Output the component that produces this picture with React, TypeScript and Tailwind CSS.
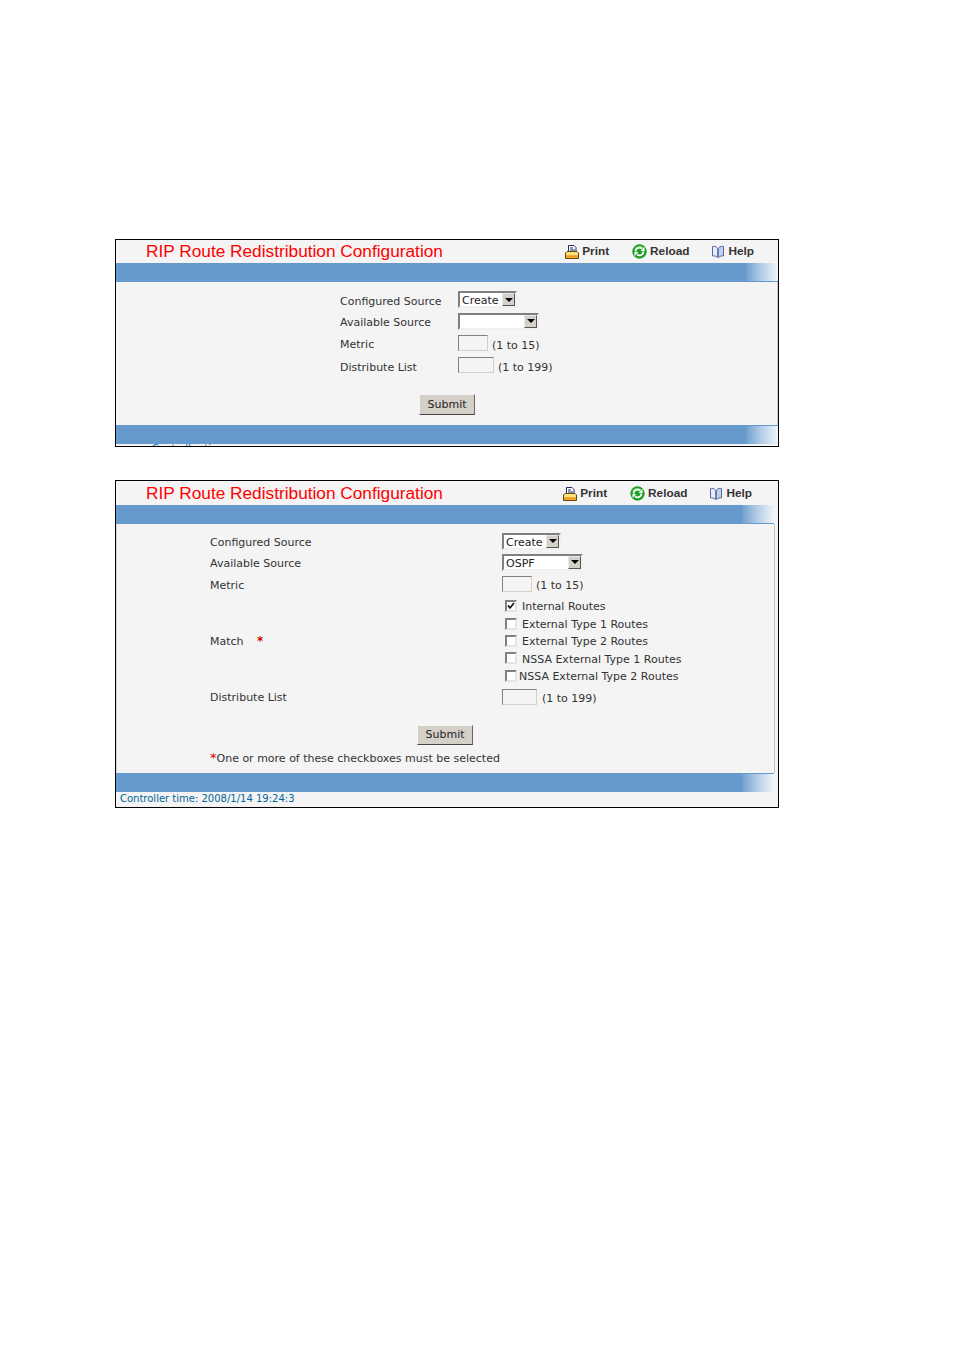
import * as React from "react";

const body = "font-['DejaVu_Sans',sans-serif] text-[11px] text-[#333333]";

function PrintIcon() {
  return (
    <svg width="14" height="14" viewBox="0 0 14 14" className="mr-[3px] shrink-0">
      <path d="M3.500 .5h5.500l2 2v5h-7.500z" fill="#fff" stroke="#1d2a5c" />
      <path d="M5 3h3M5 5h5" stroke="#1d2a5c" />
      <path d="M.5 8l1.500-1.500h10L13.500 8v5.500H.5z" fill="#ffe27a" stroke="#5c4a12" />
      <path d="M1 11.500h12" stroke="#f09a1c" strokeWidth="2.500" />
    </svg>
  );
}

function ReloadIcon() {
  return (
    <svg width="15" height="15" viewBox="0 0 15 15" className="mr-[3px] shrink-0">
      <circle cx="7.500" cy="7.500" r="7.200" fill="#1f9e26" />
      <path d="M2 5.500a6 6 0 0 1 11 0c-3-1.500-8-1.500-11 0z" fill="#6fd45c" />
      <path d="M3.500 7.500a4 4 0 0 1 6.500-3M11.500 7.500a4 4 0 0 1-6.500 3" fill="none" stroke="#fff" strokeWidth="1.800" />
      <path d="M8.500 7h4V3zM6.500 8h-4v4z" fill="#fff" />
    </svg>
  );
}

function HelpIcon() {
  return (
    <svg width="14" height="14" viewBox="0 0 14 14" className="mr-[3px] shrink-0">
      <path d="M1.500 1.500c1.500-.5 3.500 0 5 1.500v9.500c-1.500-1.500-3.500-2-5-1.500z" fill="#e6ecf8" stroke="#56689c" />
      <path d="M12.500 1.500c-1.500-.5-3.500 0-5 1.500v9.500c1.500-1.500 3.500-2 5-1.500z" fill="#c3d0ec" stroke="#56689c" />
      <path d="M6.500 3h1v9.500h-1z" fill="#7f94c8" />
    </svg>
  );
}

function Toolbar({ className = "" }: { className?: string }) {
  return (
    <div className={`flex items-center gap-[23px] font-['Liberation_Sans',sans-serif] text-[11.800px] font-bold text-[#333333] ${className}`}>
      <span className="flex items-center"><PrintIcon />Print</span>
      <span className="flex items-center"><ReloadIcon />Reload</span>
      <span className="-ml-[1px] flex items-center"><HelpIcon />Help</span>
    </div>
  );
}

function Bar({ className = "", lineOnTop = false }: { className?: string; lineOnTop?: boolean }) {
  return (
    <div className={`h-[19px] shrink-0 bg-[#6699cc] ${className}`}>
      <div
        className={`ml-auto h-[18px] w-[32px] bg-[repeating-conic-gradient(#ffffff22_0%_25%,transparent_0%_50%),linear-gradient(to_right,#6699cc,#aac7e3_45%,#eef4fa)] [background-size:2px_2px,100%_100%] ${lineOnTop ? "mt-[1px]" : ""}`}
      />
    </div>
  );
}

function Select({ value, width }: { value: string; width: string }) {
  return (
    <div className={`mb-[1px] flex h-[17px] items-stretch border-2 border-t-[#808080] border-l-[#808080] border-r-[#f0f0f0] border-b-[#f0f0f0] bg-white ${width}`}>
      <span className="flex-1 pl-[2px] leading-[15px] text-[#222222]">{value}</span>
      <span className="flex w-[13px] items-center justify-center border border-t-[#e8e8e8] border-l-[#e8e8e8] border-r-[#555555] border-b-[#555555] bg-[#d4d0c8]">
        <span className="h-0 w-0 border-x-[4px] border-t-[4px] border-x-transparent border-t-black" />
      </span>
    </div>
  );
}

function TextBox({ width }: { width: string }) {
  return <div className={`h-[16px] border border-t-[#808080] border-l-[#808080] border-r-[#d4d0c8] border-b-[#d4d0c8] bg-[#f4f4f4] ${width}`} />;
}

function Submit({ className = "" }: { className?: string }) {
  return (
    <div className={`flex items-center justify-center border border-t-[#f4f4f4] border-l-[#f4f4f4] border-r-[#666666] border-b-[#444444] bg-[#d4d0c8] text-[#222222] ${className}`}>
      Submit
    </div>
  );
}

function Check({ on = false }: { on?: boolean }) {
  return (
    <span className="flex h-[12px] w-[12px] shrink-0 items-center justify-center border-2 border-t-[#808080] border-l-[#808080] border-r-[#e4e4e4] border-b-[#e4e4e4] bg-white">
      {on && (
        <svg width="8" height="8" viewBox="0 0 8 8" className="shrink-0">
          <path d="M1 3.500l2 2.500 4-5" fill="none" stroke="#111111" strokeWidth="1.700" />
        </svg>
      )}
    </span>
  );
}

function Title() {
  return (
    <div className="mb-[1px] pl-[30px] font-['Liberation_Sans',sans-serif] text-[17.250px] leading-[22px] text-[#ff0000]">
      RIP Route Redistribution Configuration
    </div>
  );
}

function FirstPanel() {
  const row = "flex items-center pl-[224px]";
  return (
    <div className="flex h-[208px] w-[664px] flex-col border border-black bg-[#f4f4f4]">
      <div className="flex h-[23px] shrink-0 items-center justify-between pr-[24px]">
        <Title />
        <Toolbar />
      </div>
      <Bar className="border-b border-b-[#6699cc]" />
      <div className={`h-[143px] shrink-0 border-r border-r-[#c8d0d8] pt-[7px] ${body}`}>
        <div className={`h-[22px] ${row}`}>
          <span className="w-[118px] pt-[5px]">Configured Source</span>
          <Select value="Create" width="w-[59px]" />
        </div>
        <div className={`h-[21px] ${row}`}>
          <span className="w-[118px] pt-[3px]">Available Source</span>
          <Select value="" width="w-[81px]" />
        </div>
        <div className={`h-[22px] ${row}`}>
          <span className="w-[118px] pt-[5px]">Metric</span>
          <TextBox width="w-[30px]" />
          <span className="ml-[4px] pt-[6px]">(1 to 15)</span>
        </div>
        <div className={`h-[22px] ${row}`}>
          <span className="w-[118px] pt-[7px]">Distribute List</span>
          <TextBox width="w-[36px]" />
          <span className="ml-[4px] pt-[7px]">(1 to 199)</span>
        </div>
        <Submit className="mt-[18px] ml-[303px] h-[21px] w-[56px] pt-[2px]" />
      </div>
      <Bar lineOnTop />
      <div className="h-[2px] overflow-hidden pl-[36px] font-['DejaVu_Sans',sans-serif] text-[10px] leading-[12px] text-[#0066aa]">
        <div className="-mt-[1px]">Controller time</div>
      </div>
    </div>
  );
}

const matches = [
  { label: "Internal Routes", on: true, gap: "ml-[5px]" },
  { label: "External Type 1 Routes", gap: "ml-[5px]" },
  { label: "External Type 2 Routes", gap: "ml-[5px]" },
  { label: "NSSA External Type 1 Routes", gap: "ml-[5px]" },
  { label: "NSSA External Type 2 Routes", gap: "ml-[2px]" },
];

function SecondPanel() {
  const row = "flex items-center pl-[93px]";
  const label = "w-[292px] pt-[4px]";
  return (
    <div className="mt-[33px] flex h-[328px] w-[664px] flex-col border border-black bg-[#f4f4f4]">
      <div className="flex h-[24px] shrink-0 items-center justify-between pr-[26px]">
        <Title />
        <Toolbar className="pt-[1px]" />
      </div>
      <Bar className="mr-[4px] border-b border-b-[#6699cc]" />
      <div className={`h-[249px] w-[659px] shrink-0 border-l border-r border-l-[#d8d8d8] border-r-[#b8c4d0] pt-[7px] ${body}`}>
        <div className={`h-[21px] ${row}`}>
          <span className={label}>Configured Source</span>
          <Select value="Create" width="w-[59px]" />
        </div>
        <div className={`h-[21px] ${row}`}>
          <span className={label}>Available Source</span>
          <Select value="OSPF" width="w-[81px]" />
        </div>
        <div className={`h-[22px] ${row}`}>
          <span className={label}>Metric</span>
          <TextBox width="w-[30px]" />
          <span className="ml-[4px] pt-[4px]">(1 to 15)</span>
        </div>
        <div className={`h-[92px] ${row}`}>
          <span className="w-[47px] pt-[2px]">Match</span>
          <span className="w-[245px] text-[12px] font-bold text-[#cc0000]">*</span>
          <div className="flex flex-col pl-[3px]">
            {matches.map((m) => (
              <div key={m.label} className="flex h-[17.400px] items-center">
                <Check on={m.on} />
                <span className={`pt-[3px] ${m.gap}`}>{m.label}</span>
              </div>
            ))}
          </div>
        </div>
        <div className={`h-[20px] ${row}`}>
          <span className="w-[292px] pt-[2px]">Distribute List</span>
          <TextBox width="w-[35px]" />
          <span className="ml-[5px] pt-[5px]">(1 to 199)</span>
        </div>
        <Submit className="mt-[18px] ml-[300px] h-[20px] w-[56px] pt-[1px]" />
        <div className="mt-[5px] pl-[93px] leading-[16px]">
          <span className="text-[13px] text-[#cc0000]">*</span>One or more of these checkboxes must be selected
        </div>
      </div>
      <Bar className="mr-[4px]" lineOnTop />
      <div className="pl-[4px] font-['DejaVu_Sans',sans-serif] text-[10px] leading-[13px] text-[#006699]">
        Controller time: 2008/1/14 19:24:3
      </div>
    </div>
  );
}

export default function App() {
  return (
    <div className="min-h-[1350px] bg-white pt-[239px] pl-[115px]">
      <FirstPanel />
      <SecondPanel />
    </div>
  );
}
